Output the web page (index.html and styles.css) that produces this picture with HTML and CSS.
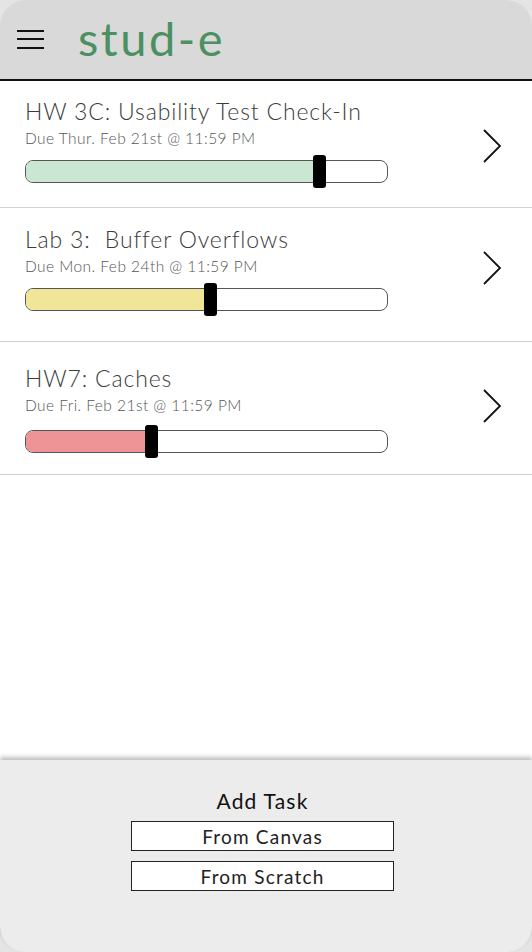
FILE: index.html
```html
<!DOCTYPE html>
<html lang="en">
<head>
    <meta charset="UTF-8">
    <meta name="viewport" content="width=device-width, initial-scale=1.0">
    <title>stud-e</title>
    <link rel="stylesheet" href="styles.css">
</head>
<body>
<div class="app">

    <header class="topbar">
        <button class="menu" aria-label="Menu">
            <span></span><span></span><span></span>
        </button>
        <h1 class="brand">stud-e</h1>
    </header>

    <main class="tasks">
        <div class="task task-first">
            <div class="task-info">
                <h2>HW 3C: Usability Test Check-In</h2>
                <p class="due">Due Thur. Feb 21st @ 11:59 PM</p>
                <div class="bar">
                    <div class="fill green" style="width: 81%"></div>
                    <div class="handle" style="left: 79.5%"></div>
                </div>
            </div>
            <svg class="chev" viewBox="0 0 20 36"><path d="M2 2 L18 18 L2 34" /></svg>
        </div>

        <div class="task task-second">
            <div class="task-info">
                <h2>Lab 3:&nbsp; Buffer Overflows</h2>
                <p class="due">Due Mon. Feb 24th @ 11:59 PM</p>
                <div class="bar">
                    <div class="fill yellow" style="width: 51%"></div>
                    <div class="handle" style="left: 49.2%"></div>
                </div>
            </div>
            <svg class="chev" viewBox="0 0 20 36"><path d="M2 2 L18 18 L2 34" /></svg>
        </div>

        <div class="task task-third">
            <div class="task-info">
                <h2>HW7: Caches</h2>
                <p class="due">Due Fri. Feb 21st @ 11:59 PM</p>
                <div class="bar">
                    <div class="fill red" style="width: 35%"></div>
                    <div class="handle" style="left: 33%"></div>
                </div>
            </div>
            <svg class="chev" viewBox="0 0 20 36"><path d="M2 2 L18 18 L2 34" /></svg>
        </div>
    </main>

    <footer class="add">
        <h3>Add Task</h3>
        <button class="add-btn">From Canvas</button>
        <button class="add-btn">From Scratch</button>
    </footer>

</div>
</body>
</html>
```

FILE: styles.css
```css
body {
    margin: 0;
    padding: 0;
    background: #e4e4e4;
    font-family: "Lato", "Noto Sans", sans-serif;
}
.app {
    width: 532px;
    height: 952px;
    display: flex;
    flex-direction: column;
    background: #e4e4e4;
}
.topbar {
    background: #d9d9d9;
    border-bottom: 2px solid #111;
    border-radius: 26px 26px 0 0;
    display: flex;
    align-items: center;
    box-sizing: border-box;
    height: 81px;
    padding: 0 0 4px 17px;
}
.menu {
    width: 28px;
    height: 19px;
    padding: 0;
    border: none;
    background: none;
    display: flex;
    flex-direction: column;
    justify-content: space-between;
    margin-top: 3px;
}
.menu span {
    display: block;
    height: 2px;
    width: 27px;
    background: #111;
}
.brand {
    margin: 0 0 0 33px;
    font-size: 47px;
    font-weight: 400;
    color: #4c9062;
    letter-spacing: 2.5px;
}
.tasks {
    flex: 1;
    background: #fff;
}
.task {
    display: flex;
    align-items: center;
    border-bottom: 1.5px solid #d3d3d3;
    padding: 16px 30px 24px 25px;
}
.task-first .chev {
    margin-top: 12px;
}
.task-second {
    padding: 17px 30px 30px 25px;
}
.task-third {
    padding: 22px 30px 21px 25px;
}
.task-third .bar {
    margin-top: 16px;
}
.task-third .chev {
    margin-top: -6px;
}
.task-info {
    flex: 1;
}
.task h2 {
    margin: 0;
    font-size: 23px;
    font-weight: 300;
    color: #3c3c3c;
    letter-spacing: 0.85px;
}
.due {
    margin: 4px 0 0;
    font-size: 15.5px;
    font-weight: 300;
    color: #555;
    letter-spacing: 0.45px;
}
.bar {
    position: relative;
    width: 361px;
    height: 21px;
    margin-top: 13px;
    border: 1px solid #555;
    border-radius: 8px;
    background: #fff;
}
.fill {
    height: 100%;
    border-radius: 7px 0 0 7px;
}
.green { background: #c9e7d3; }
.yellow { background: #f1e698; }
.red { background: #ee9496; }
.handle {
    position: absolute;
    top: -6px;
    width: 13px;
    height: 33px;
    background: #000;
    border-radius: 3px;
}
.chev {
    width: 20px;
    height: 36px;
    fill: none;
    stroke: #111;
    stroke-width: 1.8;
}
.add {
    height: 192px;
    background: #ececec;
    border-radius: 0 0 26px 26px;
    box-shadow: 0 -3px 4px rgba(0, 0, 0, 0.25);
    display: flex;
    flex-direction: column;
    align-items: center;
    padding: 28px 7px 0 0;
    box-sizing: border-box;
}
.add h3 {
    margin: 0 0 8px;
    font-size: 21px;
    font-weight: 400;
    color: #111;
    letter-spacing: 1.2px;
}
.add-btn {
    width: 263px;
    height: 30px;
    margin-bottom: 10px;
    background: #fff;
    border: 1.5px solid #222;
    font-family: inherit;
    font-size: 19px;
    color: #222;
    letter-spacing: 1.2px;
    padding: 0;
}
```
